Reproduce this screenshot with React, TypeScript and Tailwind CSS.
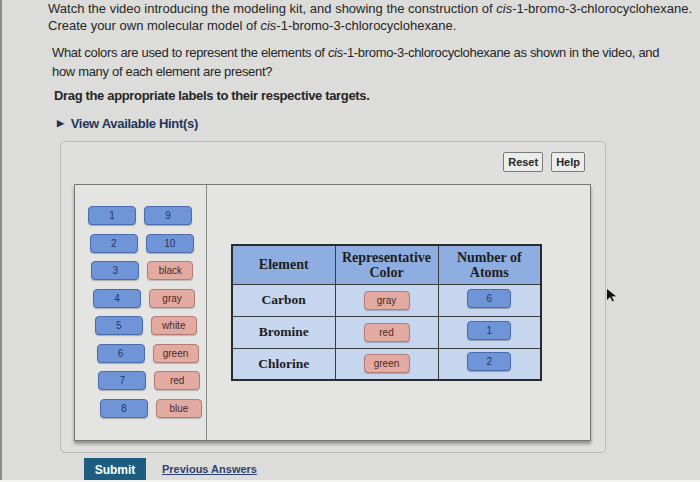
import React from "react";

const Blue = ({ t, w = "w-[48px]" }: { t: string; w?: string }) => (
  <div className={`${w} h-[19px] rounded-[4px] bg-[#6f95d8] border border-[#4a6cab] flex items-center justify-center text-[10px] text-[#1f3566] shadow-[0_1px_1px_rgba(0,0,0,0.25)]`}>
    {t}
  </div>
);
const Pink = ({ t, w = "w-[46px]" }: { t: string; w?: string }) => (
  <div className={`${w} h-[19px] rounded-[4px] bg-[#e3aaa2] border border-[#b47c74] flex items-center justify-center text-[10px] text-[#4a2a28] shadow-[0_1px_1px_rgba(0,0,0,0.2)]`}>
    {t}
  </div>
);

export default function App() {
  const rows: [string, React.ReactNode][] = [
    ["1", <Blue t="9" />],
    ["2", <Blue t="10" />],
    ["3", <Pink t="black" />],
    ["4", <Pink t="gray" />],
    ["5", <Pink t="white" />],
    ["6", <Pink t="green" />],
    ["7", <Pink t="red" />],
    ["8", <Pink t="blue" />],
  ];
  const data = [
    ["Carbon", "gray", "6"],
    ["Bromine", "red", "1"],
    ["Chlorine", "green", "2"],
  ];
  return (
    <div
      className="w-[700px] h-[482px] overflow-hidden bg-[#dcdddb] relative text-[#262626]"
      style={{ fontFamily: '"Liberation Sans", Arial, sans-serif' }}
    >
      <div className="w-[2px] h-full absolute left-0 top-0 bg-[#8c8d8b]" />
      <div className="pl-[48px] pt-0 text-[13px] leading-[17px]">
        <p>
          Watch the video introducing the modeling kit, and showing the construction of <i>cis</i>-1-bromo-3-chlorocyclohexane.
          <br />
          Create your own molecular model of <i>cis</i>-1-bromo-3-chlorocyclohexane.
        </p>
        <p className="mt-[9px] pl-[4px] leading-[19px] tracking-[-0.32px]">
          What colors are used to represent the elements of <i>cis</i>-1-bromo-3-chlorocyclohexane as shown in the video, and
          <br />
          how many of each element are present?
        </p>
        <p className="mt-[6px] pl-[6px] font-bold tracking-[-0.34px]">Drag the appropriate labels to their respective targets.</p>
        <div className="mt-[11px] pl-[9px] flex items-center gap-[7px] font-bold text-[#22345a] tracking-[-0.3px]">
          <span className="text-[9px]">▶</span>
          <span>View Available Hint(s)</span>
        </div>
      </div>

      <div className="ml-[60px] mt-[9px] w-[546px] h-[312px] border border-[#b9bab7] rounded-[5px] bg-[#dfe0dd] flex flex-col">
        <div className="flex justify-end gap-[8px] pt-[10px] pr-[20px]">
          <div className="px-[4px] h-[20px] flex items-center border border-[#7a7a7a] rounded-[2px] bg-[#ececea] text-[11px] font-bold">Reset</div>
          <div className="px-[4px] h-[20px] flex items-center border border-[#7a7a7a] rounded-[2px] bg-[#ececea] text-[11px] font-bold">Help</div>
        </div>
        <div className="ml-[13px] mt-[12px] w-[517px] h-[257px] border border-[#777] flex bg-[#e4e5e2] shadow-[0_3px_3px_rgba(0,0,0,0.35)]">
          <div className="w-[132px] border-r border-[#8a8a88] pt-[21px] pl-[13px] flex flex-col gap-[8.5px]">
            {rows.map(([a, b], i) => (
              <div key={i} className="flex gap-[8px]" style={{ marginLeft: i * 1.7 }}>
                <Blue t={a} />
                {b}
              </div>
            ))}
          </div>
          <div className="flex-1 pl-[24px] pt-[59px]">
            <table
              className="border-collapse border-2 border-[#2a2a2a] text-[13px] text-[#1e1e1e]"
              style={{ fontFamily: '"Liberation Serif", "Times New Roman", serif' }}
            >
              <thead>
                <tr className="bg-[#8eaee2] h-[39px]">
                  <th className="w-[103px] border border-[#3a3a3a] font-bold text-[14px] leading-[15px]">Element</th>
                  <th className="w-[103px] border border-[#3a3a3a] font-bold text-[14px] leading-[15px]">Representative<br />Color</th>
                  <th className="w-[103px] border border-[#3a3a3a] font-bold text-[14px] leading-[15px]">Number of<br />Atoms</th>
                </tr>
              </thead>
              <tbody>
                {data.map(([e, c, n]) => (
                  <tr key={e} className="bg-[#c6d6ee] h-[32px]">
                    <td className="border border-[#3a3a3a] text-center text-[13.5px] font-bold">{e}</td>
                    <td className="border border-[#3a3a3a]">
                      <div className="flex justify-center" style={{ fontFamily: '"Liberation Sans", Arial, sans-serif' }}>
                        <Pink t={c} />
                      </div>
                    </td>
                    <td className="border border-[#3a3a3a]">
                      <div className="flex justify-center -mt-[4px]" style={{ fontFamily: '"Liberation Sans", Arial, sans-serif' }}>
                        <Blue t={n} w="w-[44px]" />
                      </div>
                    </td>
                  </tr>
                ))}
              </tbody>
            </table>
          </div>
        </div>
      </div>

      <div className="ml-[84px] mt-[5px] flex items-center gap-[16px]">
        <div className="w-[62px] h-[23px] bg-[#1d5e80] text-white text-[12px] font-bold flex items-center justify-center">Submit</div>
        <span className="text-[11px] font-bold text-[#2c4270] underline">Previous Answers</span>
      </div>
      <div className="absolute left-0 bottom-0 w-full h-[2px] bg-[#f4f4f2]" />
      <svg className="absolute left-[606px] top-[288px]" width="12" height="14" viewBox="0 0 12 14">
        <path d="M1 1 L1 12 L4 9 L6.5 13.5 L8 12.8 L5.6 8.4 L10 8.2 Z" fill="#111" />
      </svg>
    </div>
  );
}
